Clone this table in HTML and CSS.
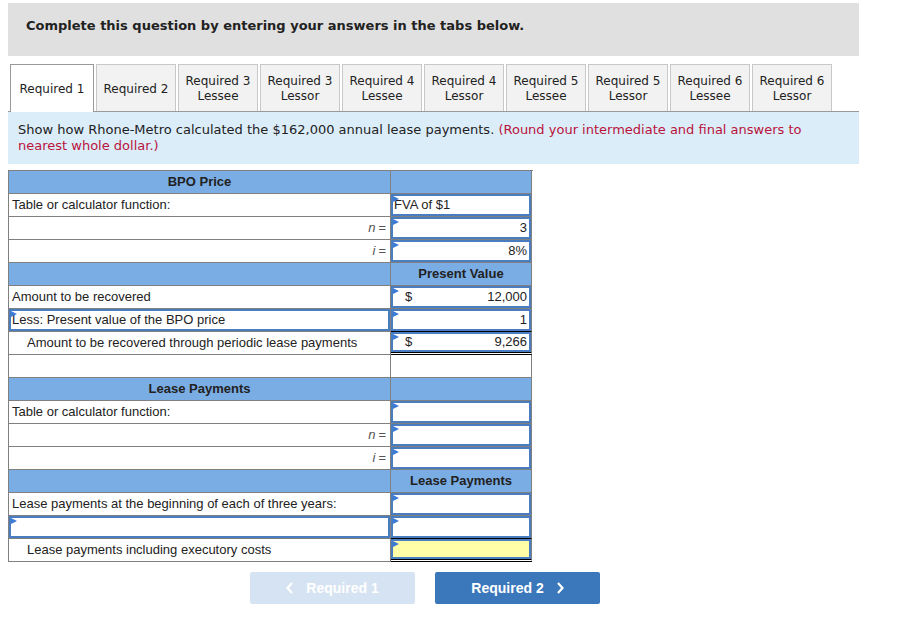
FILE: index.html
```html
<!DOCTYPE html>
<html>
<head>
<meta charset="utf-8">
<link rel="stylesheet" href="styles.css">
</head>
<body>
<div class="page">
  <div class="banner">Complete this question by entering your answers in the tabs below.</div>
  <div class="tabs">
    <div class="tab active wide">Required 1</div>
    <div class="tab">Required 2</div>
    <div class="tab">Required 3<br>Lessee</div>
    <div class="tab">Required 3<br>Lessor</div>
    <div class="tab">Required 4<br>Lessee</div>
    <div class="tab">Required 4<br>Lessor</div>
    <div class="tab">Required 5<br>Lessee</div>
    <div class="tab">Required 5<br>Lessor</div>
    <div class="tab">Required 6<br>Lessee</div>
    <div class="tab">Required 6<br>Lessor</div>
  </div>
  <div class="instr"><p class="line">Show how Rhone-Metro calculated the $162,000 annual lease payments. <span class="red">(Round your intermediate and final answers to</span><br><span class="red">nearest whole dollar.)</span></p></div>

  <div class="grid">
    <div class="row hdr"><div class="c l center b">BPO Price</div><div class="c r"></div></div>
    <div class="row"><div class="c l">Table or calculator function:</div><div class="c r"><div class="inp left">FVA of $1</div></div></div>
    <div class="row"><div class="c l right var"><i>n</i> =</div><div class="c r"><div class="inp num">3</div></div></div>
    <div class="row"><div class="c l right var"><i>i</i> =</div><div class="c r"><div class="inp num">8%</div></div></div>
    <div class="row hdr"><div class="c l"></div><div class="c r center b">Present Value</div></div>
    <div class="row"><div class="c l">Amount to be recovered</div><div class="c r"><div class="inp num"><span class="dol">$</span>12,000</div></div></div>
    <div class="row"><div class="c l"><div class="inp left">Less: Present value of the BPO price</div></div><div class="c r single"><div class="inp num">1</div></div></div>
    <div class="row"><div class="c l indent">Amount to be recovered through periodic lease payments</div><div class="c r double"><div class="inp num"><span class="dol">$</span>9,266</div></div></div>
    <div class="row"><div class="c l"></div><div class="c r"></div></div>
    <div class="row hdr"><div class="c l center b">Lease Payments</div><div class="c r"></div></div>
    <div class="row"><div class="c l">Table or calculator function:</div><div class="c r"><div class="inp"></div></div></div>
    <div class="row"><div class="c l right var"><i>n</i> =</div><div class="c r"><div class="inp"></div></div></div>
    <div class="row"><div class="c l right var"><i>i</i> =</div><div class="c r"><div class="inp"></div></div></div>
    <div class="row hdr"><div class="c l"></div><div class="c r center b">Lease Payments</div></div>
    <div class="row"><div class="c l">Lease payments at the beginning of each of three years:</div><div class="c r"><div class="inp"></div></div></div>
    <div class="row"><div class="c l"><div class="inp"></div></div><div class="c r single"><div class="inp"></div></div></div>
    <div class="row"><div class="c l indent">Lease payments including executory costs</div><div class="c r double"><div class="inp yellow"></div></div></div>
  </div>

  <div class="nav">
    <div class="btn prev"><svg width="8" height="12" viewBox="0 0 8 12"><path d="M6 1 L1.5 6 L6 11" fill="none" stroke="#fff" stroke-width="2.2"/></svg><span>Required 1</span></div>
    <div class="btn next"><span>Required 2</span><svg width="8" height="12" viewBox="0 0 8 12"><path d="M2 1 L6.5 6 L2 11" fill="none" stroke="#fff" stroke-width="2.2"/></svg></div>
  </div>
</div>
</body>
</html>
```
FILE: styles.css
```css
html, body { margin: 0; padding: 0; background: #fff; }
body { padding: 3px 8px 0 8px; }
.page { width: 851px; }
.banner {
  background: #e0e0e0;
  height: 53px;
  box-sizing: border-box;
  padding: 15px 0 0 18px;
  font: bold 13px "DejaVu Sans", Verdana, sans-serif;
  color: #222;
}
.tabs {
  display: flex;
  align-items: flex-end;
  gap: 2px;
  margin-top: 8px;
  padding-left: 2px;
  border-bottom: 1px solid #999;
  height: 48px;
  box-sizing: border-box;
}
.tab {
  width: 80px;
  height: 47px;
  box-sizing: border-box;
  background: #f2f2f2;
  border: 1px solid #c8c8c8;
  border-bottom: none;
  display: flex;
  align-items: center;
  justify-content: center;
  text-align: center;
  padding-top: 2px;
  font: 12px/15px "DejaVu Sans", Verdana, sans-serif;
  color: #222;
}
.tab.wide { width: 84px; }
.tab.active {
  background: #fff;
  border-color: #999;
  height: 48px;
  margin-bottom: -1px;
  padding-top: 1px;
}
.instr {
  background: #dcedfa;
  height: 52px;
  box-sizing: border-box;
  padding: 10px 10px 0 10px;
  font: 13px/16px "DejaVu Sans", Verdana, sans-serif;
  color: #222;
}
.line { margin: 0; }
.red { color: #b8143a; }

.grid {
  margin-top: 6px;
  width: 524px;
  border-left: 1px solid #808080;
  border-top: 1px solid #808080;
  font: 13px "Liberation Sans", Arial, sans-serif;
  color: #222;
}
.row {
  display: grid;
  grid-template-columns: 382px 141px;
  height: 23px;
}
.c {
  box-sizing: border-box;
  border-right: 1px solid #808080;
  border-bottom: 1px solid #808080;
  display: flex;
  align-items: center;
  padding: 0 3px 2px 3px;
  position: relative;
  min-width: 0;
}
.hdr .c { background: #7aade4; }
.c.center { justify-content: center; }
.c.right { justify-content: flex-end; }
.b { font-weight: bold; }
.var { color: #555; padding-right: 4px; }
.var i { margin-right: 3px; }
.indent { padding-left: 18px; }
.c.r { padding: 0; }
.hdr .c.r { padding-bottom: 2px; }
.c.l:has(.inp) { padding: 0; }
.c.single { border-bottom: 1px solid #000; }
.c.double { border-bottom: 3px double #000; }
.inp {
  position: relative;
  flex: 1;
  align-self: stretch;
  box-sizing: border-box;
  border: 2px solid #4a7cc0;
  background: #fff;
  display: flex;
  align-items: center;
  padding: 0 2px 1px 2px;
}
.inp::before {
  content: "";
  position: absolute;
  left: 0;
  top: 0;
  border-left: 6px solid #3c7ad8;
  border-top: 3px solid transparent;
  border-bottom: 3px solid transparent;
}
.inp.left { padding-left: 1px; }
.inp.num { justify-content: flex-end; }
.dol { margin-right: auto; padding-left: 10px; }
.yellow { background: #ffffa8; }

.nav {
  display: flex;
  gap: 20px;
  margin-top: 10px;
  padding-left: 242px;
}
.btn {
  width: 165px;
  height: 32px;
  border-radius: 2px;
  display: flex;
  align-items: center;
  justify-content: center;
  gap: 12px;
  color: #fff;
  font: bold 14px "Liberation Sans", Arial, sans-serif;
}
.prev { background: #d6e3f2; }
.next { background: #3b77bb; }
```
